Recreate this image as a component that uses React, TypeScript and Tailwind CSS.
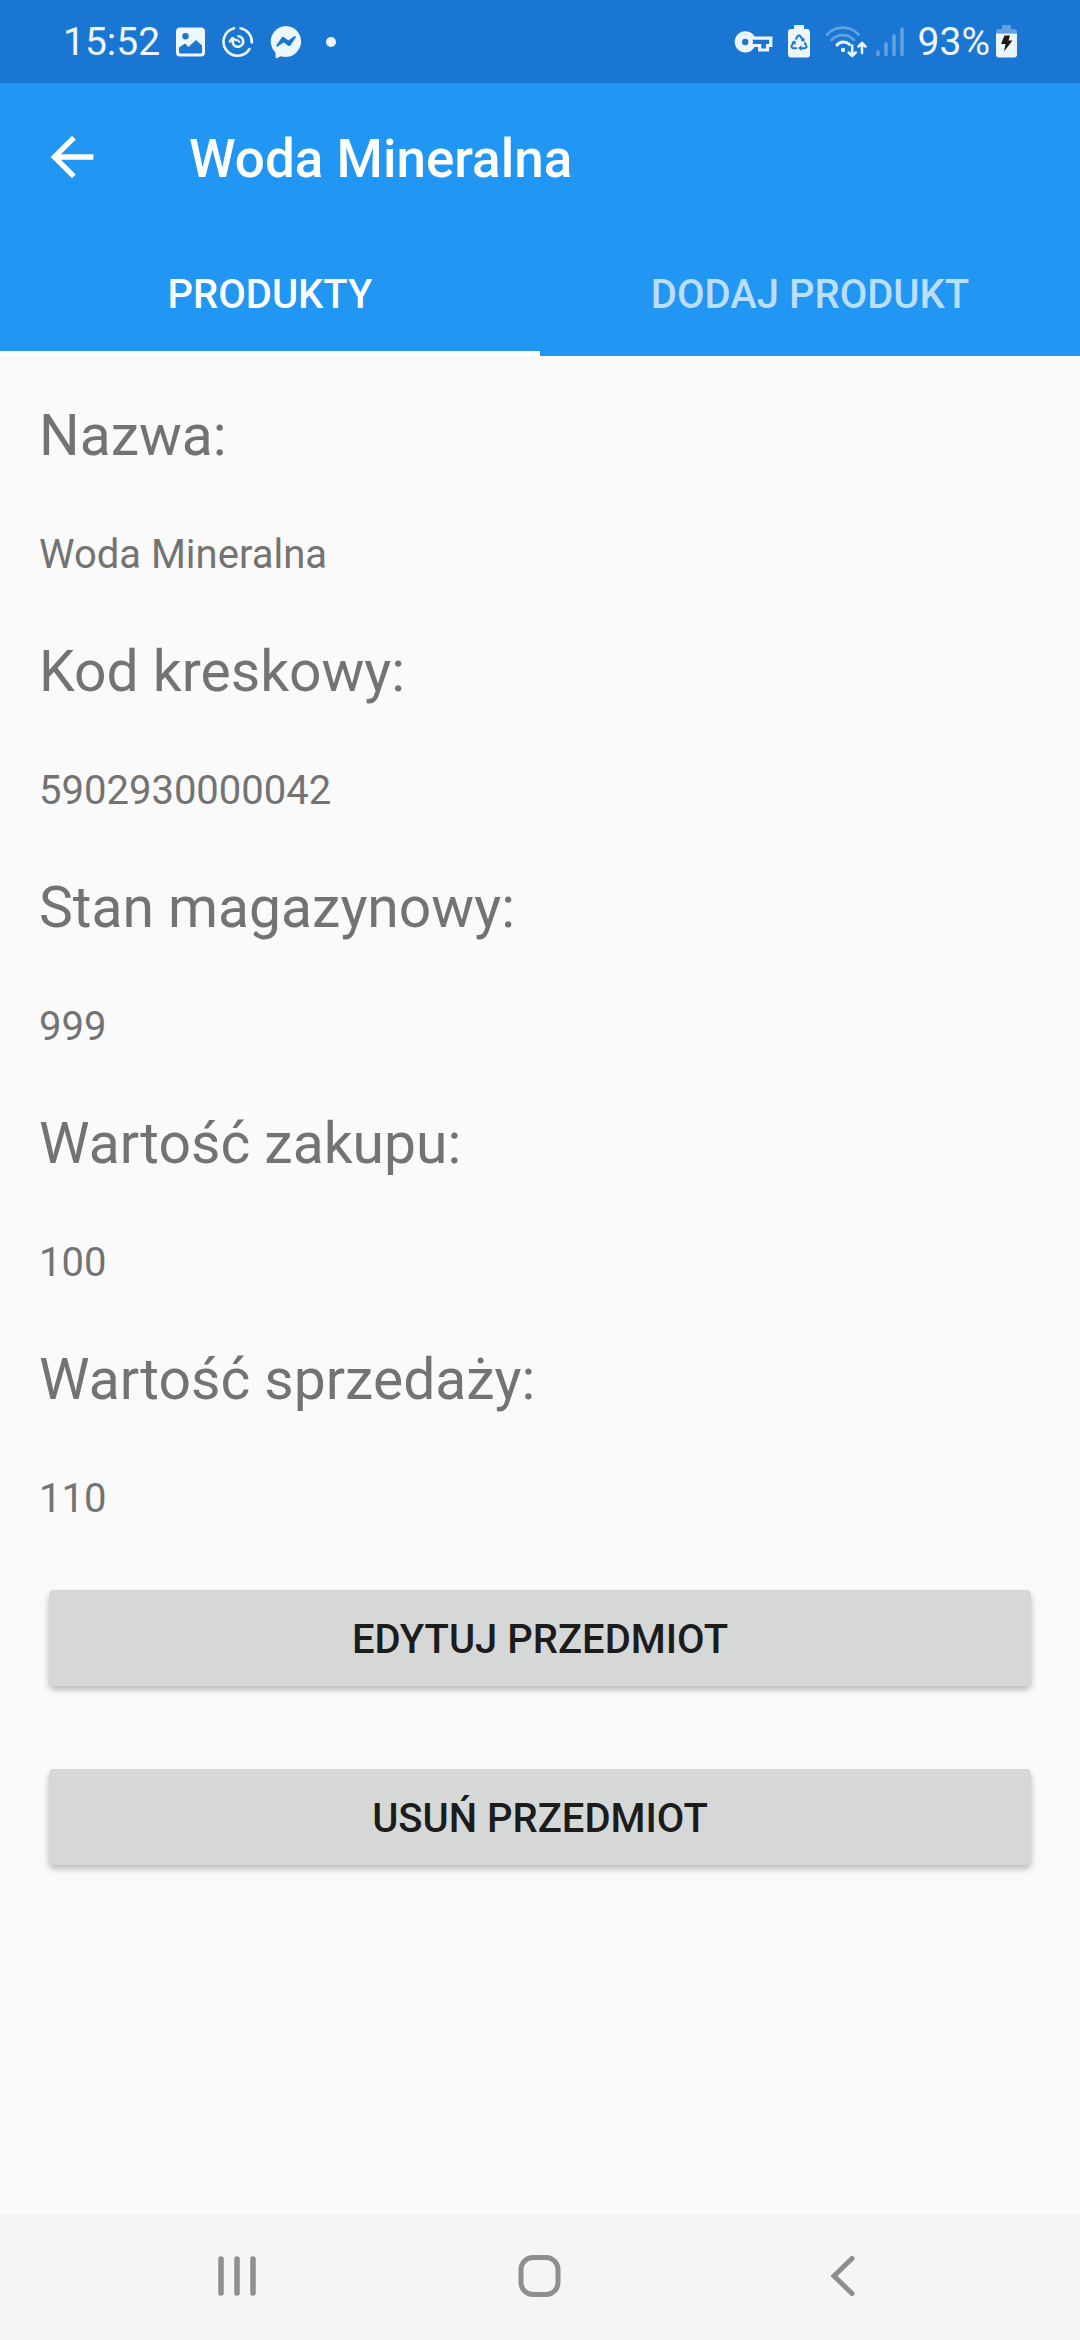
import React from "react";

const fields = [
  { label: "Nazwa:", value: "Woda Mineralna" },
  { label: "Kod kreskowy:", value: "5902930000042" },
  { label: "Stan magazynowy:", value: "999" },
  { label: "Wartość zakupu:", value: "100" },
  { label: "Wartość sprzedaży:", value: "110" },
];

function PictureIcon() {
  return (
    <svg width="30" height="30" viewBox="0 0 30 30" aria-hidden="true">
      <path
        fillRule="evenodd"
        fill="currentColor"
        d="M4 0.5h21a4 4 0 0 1 4 4v21a4 4 0 0 1-4 4h-21a4 4 0 0 1-4-4v-21a4 4 0 0 1 4-4zM3 20.500v4.500a1.500 1.500 0 0 0 1.500 1.500h20a1.500 1.500 0 0 0 1.500-1.500v-6.500l-6-5.500-7.500 7-3.500-3.500zM9.500 6a3.200 3.200 0 1 0 0 6.400a3.200 3.200 0 0 0 0-6.400z"
      />
    </svg>
  );
}

function SyncCircleIcon() {
  return (
    <svg width="32" height="32" viewBox="0 0 32 32" fill="none" stroke="currentColor" strokeLinecap="round" aria-hidden="true">
      <path d="M12 2.200A14 14 0 1 0 27.500 23" strokeWidth="2.600" />
      <path d="M18.500 2.200A14 14 0 0 1 29.800 16.500" strokeWidth="2.600" />
      <path d="M16.500 10.200a5.300 5.300 0 1 1-5.600 7l-.4-4" strokeWidth="2.600" />
      <path d="M7.800 15.500l2.700-3.500 3.500 2.200" strokeWidth="2.400" strokeLinejoin="round" />
      <path d="M15.500 14l2 2" strokeWidth="1.800" />
    </svg>
  );
}

function MessengerIcon() {
  return (
    <svg width="32" height="34" viewBox="0 0 32 34" aria-hidden="true">
      <path fill="currentColor" d="M16 1a15.500 15.500 0 1 1-5 30.300L7 33a1 1 0 0 1-1.400-1l-.1-4.300A15.500 15.500 0 0 1 16 1z" />
      <path
        fill="#1976d2"
        d="M6.400 20.300l5-7.400a2 2 0 0 1 2.900-.5l3.600 2.700a1 1 0 0 0 1.100 0l5.400-3.800a.9.900 0 0 1 1.300 1.200l-5 7.400a2 2 0 0 1-2.900.5l-3.600-2.700a1 1 0 0 0-1.100 0l-5.400 3.800a.9.900 0 0 1-1.300-1.200z"
      />
    </svg>
  );
}

function KeyIcon() {
  return (
    <svg width="40" height="24" viewBox="0 0 40 24" fill="none" stroke="currentColor" strokeWidth="3.200" aria-hidden="true">
      <path d="M19.500 8.200h17.300v7.300h-3.300v4.500h-7.800v-4.500h-6.200a9 9 0 1 1 0-7.300z" strokeLinejoin="miter" />
      <circle cx="11.200" cy="12" r="5.500" strokeWidth="4.600" />
    </svg>
  );
}

function RecycleBatteryIcon() {
  return (
    <svg width="22" height="33" viewBox="0 0 22 33" aria-hidden="true">
      <path fill="currentColor" d="M7 0h8a1 1 0 0 1 1 1v3h3a3 3 0 0 1 3 3v22.500a3 3 0 0 1-3 3h-16a3 3 0 0 1-3-3v-22.500a3 3 0 0 1 3-3h3v-3a1 1 0 0 1 1-1z" />
      <g fill="none" stroke="#1976d2" strokeWidth="2">
        <path d="M7.600 14.500l2-3.200a1.600 1.600 0 0 1 2.800 0l2.400 3.700" />
        <path d="M16.600 17.500l1.600 3a1.700 1.700 0 0 1-1.500 2.700h-4" />
        <path d="M9 23.200h-3.700a1.700 1.700 0 0 1-1.500-2.700l2-3.400" />
      </g>
      <path fill="#1976d2" d="M16.300 12.500l.2 4.400-4-1.700zM13.500 20.300v5.600l-3.300-2.800zM3.300 17.200l4-1.600.6 4.300z" />
    </svg>
  );
}

function WifiIcon() {
  return (
    <svg width="42" height="33" viewBox="0 0 42 33" fill="none" stroke="currentColor" strokeLinecap="round" aria-hidden="true">
      <g opacity="0.350" strokeWidth="2.700">
        <path d="M2 9.500a21.500 21.500 0 0 1 31.500 0" />
        <path d="M6.500 15a15.300 15.300 0 0 1 22.500 0" />
      </g>
      <path d="M12 20a8.500 8.500 0 0 1 12.500-.5" strokeWidth="3" />
      <circle cx="18" cy="25" r="2.200" fill="currentColor" stroke="none" />
      <path d="M27.200 20.500v10M23.700 27.500l3.500 3.500 3.500-3.500M37 28v-9.500M33.500 21.500l3.500-3.500 3.500 3.500" strokeWidth="2.500" strokeLinejoin="round" />
    </svg>
  );
}

function SignalIcon() {
  return (
    <svg width="28" height="30" viewBox="0 0 28 30" fill="none" stroke="currentColor" strokeLinecap="round" strokeWidth="3.600" opacity="0.350" aria-hidden="true">
      <path d="M2 25v2.500M10 17v10.500M18 9v18.500M26 2v25.500" />
    </svg>
  );
}

function ChargingIcon() {
  return (
    <svg width="21" height="33" viewBox="0 0 21 33" aria-hidden="true">
      <path fill="currentColor" opacity="0.350" d="M7 0h7a1 1 0 0 1 1 1v3h3a3 3 0 0 1 3 3v1.500h-21v-1.500a3 3 0 0 1 3-3h3v-3a1 1 0 0 1 1-1z" />
      <path fill="currentColor" d="M0 8.500h21v21a3 3 0 0 1-3 3h-15a3 3 0 0 1-3-3z" />
      <path fill="#1c1c1c" d="M8.500 10.500h5.500l-1.500 5h4l-8.500 11 1.500-7.500h-4.500z" />
    </svg>
  );
}

function StatusBar() {
  return (
    <div className="flex h-[83px] items-center bg-[#1976d2] px-[63px] text-[39px] leading-[46px] text-[#edf5fd]">
      <span>15:52</span>
      <span className="ml-4 flex items-center gap-4">
        <PictureIcon />
        <SyncCircleIcon />
        <MessengerIcon />
      </span>
      <span className="ml-6 size-[10px] rounded-full bg-current" />
      <span className="ml-auto flex items-center">
        <KeyIcon />
        <span className="ml-[14px]"><RecycleBatteryIcon /></span>
        <span className="ml-[15px]"><WifiIcon /></span>
        <span className="ml-[9px]"><SignalIcon /></span>
        <span className="ml-[14px]">93%</span>
        <span className="ml-[6px]"><ChargingIcon /></span>
      </span>
    </div>
  );
}

function AppBar() {
  return (
    <header className="bg-[#2196f3] text-white">
      <div className="flex h-[147px] items-center pl-10">
        <button type="button" aria-label="Wstecz" className="flex size-16 items-center justify-center">
          <svg width="64" height="64" viewBox="0 0 24 24" fill="currentColor" aria-hidden="true">
            <path d="M20 11H7.830l5.590-5.590L12 4l-8 8 8 8 1.410-1.410L7.830 13H20v-2z" />
          </svg>
        </button>
        <h1 className="ml-[85px] pt-1 text-[53px] leading-[62px] font-medium">Woda Mineralna</h1>
      </div>
      <div role="tablist" className="grid h-[126px] grid-cols-2 text-[40px] leading-[46px] font-medium">
        <button type="button" role="tab" aria-selected="true" className="border-b-5 border-white pt-[9px]">
          PRODUKTY
        </button>
        <button type="button" role="tab" aria-selected="false" className="border-b-5 border-transparent pt-[9px] text-[#bbdefb]">
          DODAJ PRODUKT
        </button>
      </div>
    </header>
  );
}

function ActionButton({ children }: { children: React.ReactNode }) {
  return (
    <button
      type="button"
      className="h-24 w-full rounded-[5px] bg-[#d6d7d7] pt-1 text-[40px] leading-[46px] font-medium text-[#1c1c1c] shadow-[0_4px_6px_rgba(0,0,0,0.25)]"
    >
      {children}
    </button>
  );
}

function NavigationBar() {
  return (
    <nav className="grid h-[126px] grid-cols-3 bg-[#f5f5f5] px-[86px] text-[#8f8f8f]">
      <button type="button" aria-label="Ostatnie" className="flex items-center justify-center">
        <svg width="44" height="44" viewBox="0 0 44 44" fill="none" stroke="currentColor" strokeWidth="5.500" strokeLinecap="round" aria-hidden="true">
          <path d="M6 4v34M22 4v34M38 4v34" />
        </svg>
      </button>
      <button type="button" aria-label="Ekran główny" className="flex items-center justify-center">
        <svg width="44" height="44" viewBox="0 0 44 44" fill="none" stroke="currentColor" strokeWidth="5" aria-hidden="true">
          <rect x="3" y="2.500" width="37" height="37" rx="12" />
        </svg>
      </button>
      <button type="button" aria-label="Wstecz" className="flex items-center justify-center">
        <svg width="44" height="44" viewBox="0 0 44 44" fill="none" stroke="currentColor" strokeWidth="5" strokeLinecap="round" aria-hidden="true">
          <path d="M31 3.500L13 21l18 17.500" />
        </svg>
      </button>
    </nav>
  );
}

export default function App() {
  return (
    <div className="flex min-h-screen flex-col bg-[#fafafa] font-[Roboto,sans-serif]">
      <StatusBar />
      <AppBar />
      <main className="flex-1 px-[39px] pt-[46px]">
        <dl className="flex flex-col gap-[60px] text-[#737373]">
          {fields.map((field) => (
            <div key={field.label} className="flex flex-col gap-[62px]">
              <dt className="text-[57px] leading-[68px]">{field.label}</dt>
              <dd className="text-[40px] leading-[46px]">{field.value}</dd>
            </div>
          ))}
        </dl>
        <div className="mt-[68px] flex flex-col gap-[83px] px-[10px]">
          <ActionButton>EDYTUJ PRZEDMIOT</ActionButton>
          <ActionButton>USUŃ PRZEDMIOT</ActionButton>
        </div>
      </main>
      <NavigationBar />
    </div>
  );
}
